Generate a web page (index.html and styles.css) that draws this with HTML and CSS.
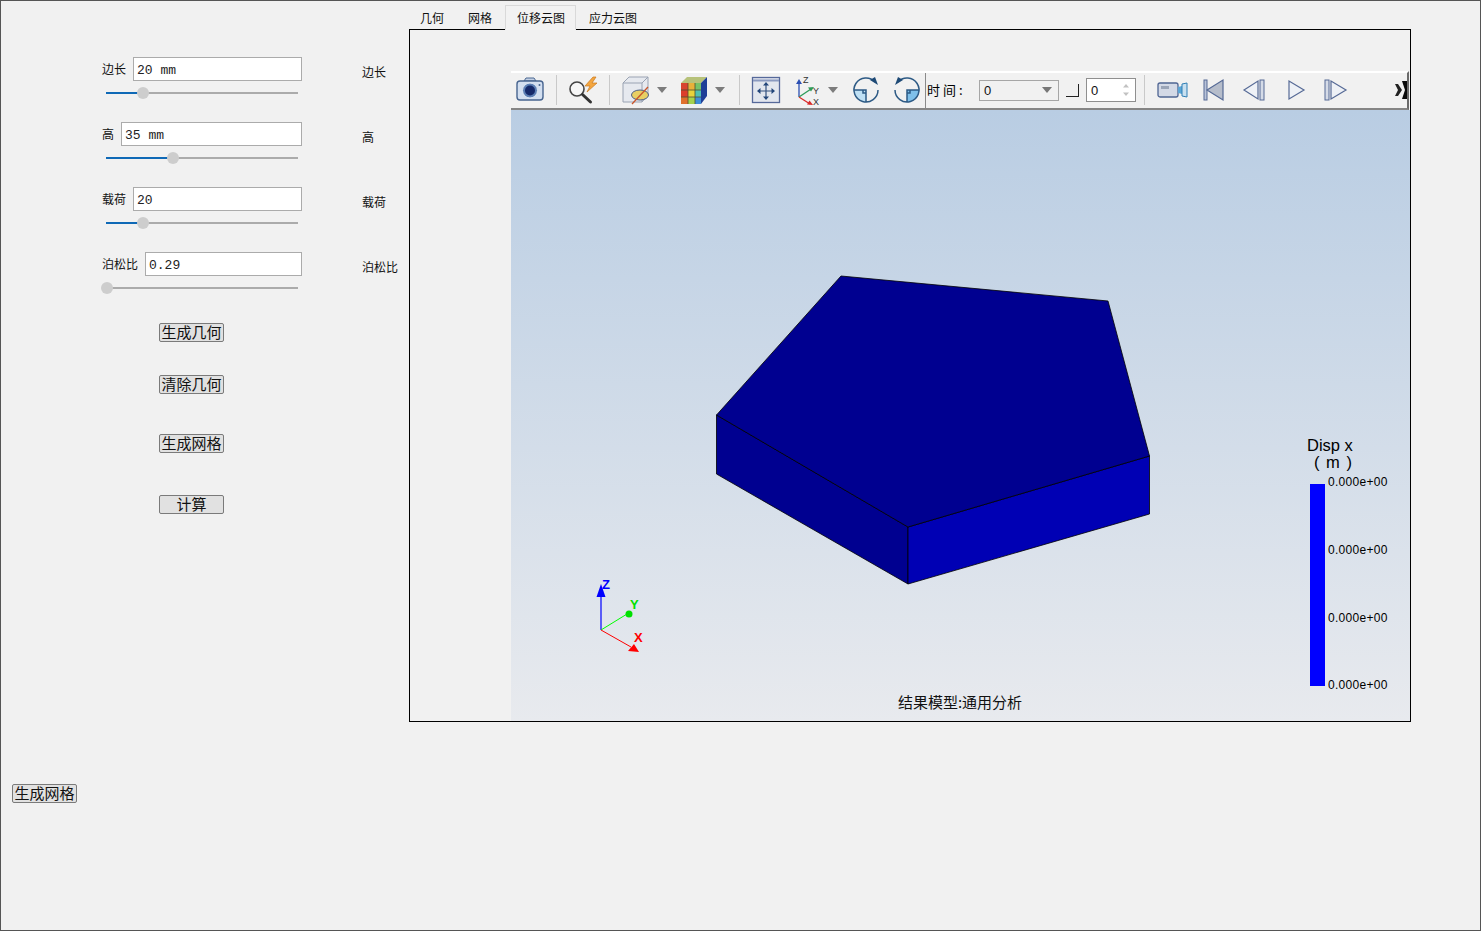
FILE: index.html
```html
<!DOCTYPE html>
<html lang="zh">
<head>
<meta charset="utf-8">
<title>位移云图</title>
<link rel="stylesheet" href="styles.css">
</head>
<body>
<div class="window">
  <div class="top">
    <aside class="panel">
      <div class="group">
        <div class="param">
          <div class="row"><span class="lbl">边长</span><input class="field" value="20 mm"></div>
          <div class="slider"><span class="fill" style="width:37px"></span><span class="thumb" style="left:37px"></span></div>
        </div>
        <span class="side">边长</span>
      </div>
      <div class="group">
        <div class="param">
          <div class="row"><span class="lbl">高</span><input class="field" value="35 mm"></div>
          <div class="slider"><span class="fill" style="width:67px"></span><span class="thumb" style="left:67px"></span></div>
        </div>
        <span class="side">高</span>
      </div>
      <div class="group">
        <div class="param">
          <div class="row"><span class="lbl">载荷</span><input class="field" value="20"></div>
          <div class="slider"><span class="fill" style="width:37px"></span><span class="thumb" style="left:37px"></span></div>
        </div>
        <span class="side">载荷</span>
      </div>
      <div class="group">
        <div class="param">
          <div class="row"><span class="lbl">泊松比</span><input class="field" value="0.29"></div>
          <div class="slider"><span class="fill" style="width:1px"></span><span class="thumb" style="left:1px"></span></div>
        </div>
        <span class="side">泊松比</span>
      </div>
      <div class="actions">
        <button class="btn a1">生成几何</button>
        <button class="btn a2">清除几何</button>
        <button class="btn a3">生成网格</button>
        <button class="btn a4">计算</button>
      </div>
    </aside>
    <main class="work">
      <nav class="tabs">
        <span class="tab">几何</span>
        <span class="tab">网格</span>
        <span class="tab active">位移云图</span>
        <span class="tab">应力云图</span>
      </nav>
      <section class="viewer">
        <div class="toolbar">
          <svg class="ic m3" viewBox="0 0 32 32"><path d="M10 7l2-3h8l2 3z" fill="#c3d0e4" stroke="#4a6690"/><rect x="3" y="7" width="26" height="19" rx="3" fill="#d3dff0" stroke="#47648f" stroke-width="1.4"/><circle cx="16" cy="16.500" r="7.500" fill="#5c7fb5" stroke="#dfe8f4"/><circle cx="16" cy="16.500" r="5" fill="#15296a"/><circle cx="25.500" cy="11" r="1" fill="#47648f"/></svg>
          <span class="sep m10"></span>
          <svg class="ic m9" viewBox="0 0 32 32"><circle cx="11" cy="15" r="7" fill="#f6f6f6" stroke="#444" stroke-width="1.600"/><path d="M16.500 20.500l8 7.500" stroke="#333" stroke-width="3" stroke-linecap="round"/><path d="M27 3l-8 9h5l-3 6 10-9h-5l4-6z" fill="#f4a640" stroke="#c9781c" stroke-width=".7"/></svg>
          <span class="sep m11"></span>
          <svg class="ic wide m10" viewBox="0 0 48 32"><path d="M3 9l6-6h19v18l-6 7H3z" fill="#e6e9ef" stroke="#9aa3b3"/><path d="M3 9h19v19M22 9l6-6" fill="none" stroke="#9aa3b3"/><ellipse cx="20" cy="21" rx="8.500" ry="5" fill="#e8cf63" stroke="#4d5f85"/><path d="M12 30L28 13" stroke="#c9552b" stroke-width="1.300"/><path d="M37 13h10l-5 6z" fill="#7c7c7c"/></svg>
          <svg class="ic wide m10" viewBox="0 0 48 32"><path d="M3 9l6-6h20l-6 6z" fill="#b7c27a"/><path d="M23 9l6-6v19l-6 8z" fill="#1f3f97"/><rect x="3" y="9" width="7" height="7" fill="#d8452f"/><rect x="10" y="9" width="7" height="7" fill="#e8b13a"/><rect x="17" y="9" width="6" height="7" fill="#77c267"/><rect x="3" y="16" width="7" height="7" fill="#dc3e2c"/><rect x="10" y="16" width="7" height="7" fill="#e7d23b"/><rect x="17" y="16" width="6" height="7" fill="#4fc0b0"/><rect x="3" y="23" width="7" height="7" fill="#e0702c"/><rect x="10" y="23" width="7" height="7" fill="#a5d24d"/><rect x="17" y="23" width="6" height="7" fill="#3f8ed8"/><path d="M3 16h20M3 23h20M10 9v21M17 9v21" stroke="#4e4e30" stroke-width=".8"/><path d="M37 13h10l-5 6z" fill="#7c7c7c"/></svg>
          <span class="sep m13"></span>
          <svg class="ic m10" viewBox="0 0 32 32"><rect x="2.500" y="3.500" width="27" height="25" fill="#e2e6ee" stroke="#56699a" stroke-width="1.300"/><path d="M3 6.500h26" stroke="#8b9ac0" stroke-width="2"/><path d="M16 10v14M9 17h14" stroke="#33507f" stroke-width="1.200"/><path d="M16 8l-3 3.500h6zM16 26l-3-3.500h6zM7 17l3.500-3v6zM25 17l-3.500-3v6z" fill="#23467a"/></svg>
          <svg class="ic wide m10" viewBox="0 0 48 32"><path d="M7 23V8" stroke="#2b4fb3" stroke-width="1.300"/><path d="M7 5l-3 5h6z" fill="#2b4fb3"/><path d="M7 23l12-8" stroke="#2e9a58" stroke-width="1.300"/><path d="M22 13l-6 .5 3 4z" fill="#2e9a58"/><path d="M7 23l11 7" stroke="#d92a2a" stroke-width="1.300"/><path d="M21 31l-6-.5 2.500-4z" fill="#d92a2a"/><text class="axis-mini" x="11" y="9">Z</text><text class="axis-mini" x="21" y="20">Y</text><text class="axis-mini" x="21" y="31">X</text><path d="M36 13h10l-5 6z" fill="#7c7c7c"/></svg>
          <svg class="ic m10" viewBox="0 0 32 32"><path d="M4 16h12v12a12 12 0 0 1-12-12z" fill="#bfe0f4"/><path d="M4 16h12v12M13 16v3h3M25 8A12 12 0 1 0 28 16" fill="none" stroke="#2d5a85" stroke-width="1.500"/><path d="M20 6l5-3 3 8z" fill="#1e4a76"/></svg>
          <svg class="ic m9" viewBox="0 0 32 32"><path d="M28 16H16v12a12 12 0 0 0 12-12z" fill="#7fc0ea"/><path d="M28 16H16v12M19 16v3h-3M7 8A12 12 0 1 1 4 16" fill="none" stroke="#2d5a85" stroke-width="1.500"/><path d="M12 6L7 3 4 11z" fill="#1e4a76"/></svg>
          <span class="sep dark m2"></span>
          <span class="time">时间:</span>
          <span class="combo"><span>0</span><i class="caret"></i></span>
          <span class="check"></span>
          <span class="spin"><span>0</span><svg class="updown" viewBox="0 0 8 14"><path d="M4 1l3 3.500H1zM4 13l3-3.500H1z" fill="#c2c2c2"/></svg></span>
          <span class="sep m8"></span>
          <svg class="ic m11" viewBox="0 0 32 32"><rect x="2" y="9" width="20" height="14" rx="2" fill="#d3d9e6" stroke="#4f6593" stroke-width="1.300"/><rect x="5" y="12" width="8" height="3" fill="#9aa5b8"/><path d="M22 13l4-1v8l-4-1z" fill="#5aa5d5"/><path d="M26 10l5-1v14l-5-1z" fill="#c8e0f0" stroke="#2f7fb5"/></svg>
          <svg class="ic m9" viewBox="0 0 32 32"><rect x="7" y="6" width="3" height="20" fill="#b9c3d8" stroke="#566a96"/><path d="M26 6v20L10 16z" fill="#b6bdcb" stroke="#566a96" stroke-width="1.200"/></svg>
          <svg class="ic m9" viewBox="0 0 32 32"><path d="M20 7v18L6 16z" fill="#eef1f6" stroke="#566a96" stroke-width="1.200"/><rect x="22" y="6" width="4" height="20" fill="#d5dbe7" stroke="#566a96"/></svg>
          <svg class="ic m10" viewBox="0 0 32 32"><path d="M9 7v18l15-9z" fill="#eef1f6" stroke="#566a96" stroke-width="1.200"/></svg>
          <svg class="ic m8" viewBox="0 0 32 32"><rect x="5" y="6" width="4" height="20" fill="#d5dbe7" stroke="#566a96"/><path d="M11 7v18l15-9z" fill="#eef1f6" stroke="#566a96" stroke-width="1.200"/></svg>
          <svg class="more" viewBox="0 0 12 18"><path d="M7 0h5v18H7l3-9z" fill="#0a0a0a"/><path d="M0 3h3l4 6-4 6H0l3-6z" fill="#222"/></svg>
        </div>
        <svg class="scene" viewBox="511 110 899 611">
          <defs>
            <linearGradient id="sky" x1="0" y1="0" x2="0" y2="1">
              <stop offset="0" stop-color="#b9cde3"/>
              <stop offset="1" stop-color="#e8eaee"/>
            </linearGradient>
          </defs>
          <rect x="511" y="110" width="899" height="611" fill="url(#sky)"/>
          <polygon class="edge" points="716.500,415 908,527 908,584 716.500,474" fill="#000090"/>
          <polygon class="edge" points="908,527 1149.500,456 1149.500,514 908,584" fill="#0000b4"/>
          <polygon class="edge" points="841,276 1108,301 1149.500,456 908,527 716.500,415" fill="#000090"/>
          <path d="M601 630V592" stroke="#0000ff" stroke-width="1.200"/>
          <path d="M601 584l-4.500 13h9z" fill="#0000ff"/>
          <path d="M601 630l26-16" stroke="#00ff00" stroke-width="1"/>
          <circle cx="629" cy="614" r="3.500" fill="#00e000"/>
          <path d="M601 630l30 17" stroke="#ff0000" stroke-width="1"/>
          <path d="M628 651l6-7 5 8z" fill="#ff0000"/>
          <text class="axis-lbl blue" x="602" y="589">Z</text>
          <text class="axis-lbl green" x="630" y="609">Y</text>
          <text class="axis-lbl red" x="634" y="642">X</text>
          <text class="model" x="960" y="708">结果模型:通用分析</text>
          <text class="leg-title" x="1307" y="451">Disp x</text>
          <text class="leg-unit" x="1314" y="468">( m )</text>
          <rect x="1310" y="484" width="15" height="202" fill="#0000ff"/>
          <text class="leg-val" x="1328" y="486">0.000e+00</text>
          <text class="leg-val" x="1328" y="554">0.000e+00</text>
          <text class="leg-val" x="1328" y="622">0.000e+00</text>
          <text class="leg-val" x="1328" y="689">0.000e+00</text>
        </svg>
      </section>
    </main>
  </div>
  <button class="btn bottom">生成网格</button>
</div>
</body>
</html>
```
FILE: styles.css
```css
html, body { margin: 0; padding: 0; }
body {
  background: #f1f1f1;
  font-family: "Noto Sans CJK SC", "Liberation Sans", sans-serif;
  color: #111;
  overflow: hidden;
}
.window {
  box-sizing: border-box;
  width: 1481px;
  height: 931px;
  border: 1px solid #555;
  background: #f1f1f1;
  display: flex;
  flex-direction: column;
  align-items: flex-start;
}
.top { display: flex; height: 721px; }

/* left parameter panel */
.panel {
  box-sizing: border-box;
  width: 408px;
  padding: 56px 0 0 101px;
}
.group { display: flex; height: 65px; }
.param { width: 200px; }
.row { display: flex; align-items: center; height: 24px; }
.lbl { font-size: 12px; line-height: 24px; margin-right: 7px; white-space: nowrap; }
.field {
  flex: 1;
  min-width: 0;
  box-sizing: border-box;
  height: 24px;
  border: 1px solid #ababab;
  background: #fff;
  padding: 2px 3px 0;
  font-family: "Liberation Mono", monospace;
  font-size: 13px;
  color: #222;
  outline: none;
}
.side { font-size: 12px; line-height: 24px; margin: 3px 0 0 60px; white-space: nowrap; }
.slider {
  position: relative;
  display: flex;
  width: 192px;
  height: 2px;
  margin: 11px 0 0 4px;
  background: #ababab;
}
.fill { height: 2px; background: #0f69b6; }
.thumb {
  position: absolute;
  top: -5px;
  width: 12px;
  height: 12px;
  margin-left: -6px;
  border-radius: 50%;
  background: #cdcdcd;
}
.actions { display: flex; flex-direction: column; align-items: flex-start; padding-left: 57px; }
.btn {
  box-sizing: border-box;
  width: 65px;
  height: 19px;
  padding: 0 0 2px;
  border: 1px solid #7a7a7a;
  border-radius: 2px;
  background: #e1e1e1;
  font-family: "Noto Sans CJK SC", sans-serif;
  font-size: 15px;
  line-height: 15px;
  color: #111;
  overflow: visible;
}
.a1 { margin-top: 6px; }
.a2 { margin-top: 33px; }
.a3 { margin-top: 40px; }
.a4 { margin-top: 42px; }
.bottom { margin: 62px 0 0 11px; }

/* tabs and viewer */
.work { display: flex; flex-direction: column; }
.tabs { display: flex; height: 25px; padding-top: 4px; margin: 0 0 -1px -1px; position: relative; z-index: 1; }
.tab {
  box-sizing: border-box;
  height: 25px;
  padding: 0 11px;
  border: 1px solid transparent;
  border-bottom: 0;
  font-size: 12px;
  line-height: 23px;
}
.active { margin: 0 1px; padding-right: 10px; border-color: #d9d9d9; background: #f2f2f2; border-bottom: 1px solid #f2f2f2; }
.viewer {
  box-sizing: border-box;
  width: 1002px;
  height: 693px;
  border: 1px solid #000;
  padding: 41px 0 0 101px;
  display: flex;
  flex-direction: column;
}
.toolbar {
  box-sizing: border-box;
  display: flex;
  align-items: center;
  flex: none;
  width: 898px;
  height: 39px;
  padding-bottom: 1px;
  border-top: 2px solid #fff;
  border-bottom: 2px solid #858585;
  border-right: 2px solid #6a6a6a;
  font-size: 13px;
}
.ic { width: 32px; height: 32px; flex: none; }
.wide { width: 48px; }
.sep { flex: none; width: 1px; height: 30px; background: #c9c9c9; }
.dark { height: 35px; background: #8a8a8a; }
.m2 { margin-left: 2px; }
.m3 { margin-left: 3px; }
.m8 { margin-left: 8px; }
.m9 { margin-left: 9px; }
.m10 { margin-left: 10px; }
.m11 { margin-left: 11px; }
.m13 { margin-left: 13px; }
.time { width: 52px; margin-left: 1px; padding-bottom: 2px; letter-spacing: 3px; white-space: nowrap; color: #000; }
.combo, .spin {
  box-sizing: border-box;
  display: flex;
  align-items: center;
  justify-content: space-between;
  font-family: "Liberation Sans", sans-serif;
  font-size: 13px;
  flex: none;
}
.combo { width: 80px; height: 21px; padding: 0 6px 0 4px; border: 1px solid #a6a6a6; }
.caret { width: 0; height: 0; border: 5px solid transparent; border-top: 6px solid #777; border-bottom: 0; }
.check {
  box-sizing: border-box;
  flex: none;
  width: 13px;
  height: 13px;
  margin-left: 7px;
  border-right: 1px solid #222;
  border-bottom: 1px solid #222;
}
.spin { width: 50px; height: 24px; margin-left: 7px; padding: 0 5px 0 4px; border: 1px solid #8f8f8f; background: #fff; }
.updown { width: 8px; height: 14px; }
.axis-mini { font: 9px "Liberation Sans", sans-serif; fill: #333; }
.more { flex: none; width: 12px; height: 18px; margin-left: 43px; }
.scene { display: block; flex: none; width: 899px; height: 611px; }
.edge { stroke: #000; stroke-width: .8; stroke-linejoin: round; }
.axis-lbl { font: bold 13px "Liberation Sans", sans-serif; }
.blue { fill: #0000ff; }
.green { fill: #00e000; }
.red { fill: #ff0000; }
.model { font: 15px "Noto Sans CJK SC", sans-serif; fill: #111; text-anchor: middle; }
.leg-title { font: 16.500px "Liberation Sans", sans-serif; fill: #000; }
.leg-unit { font: 16.500px "Liberation Sans", sans-serif; fill: #000; letter-spacing: 1px; }
.leg-val { font: 12px "Liberation Sans", sans-serif; fill: #000; letter-spacing: .3px; }
```
